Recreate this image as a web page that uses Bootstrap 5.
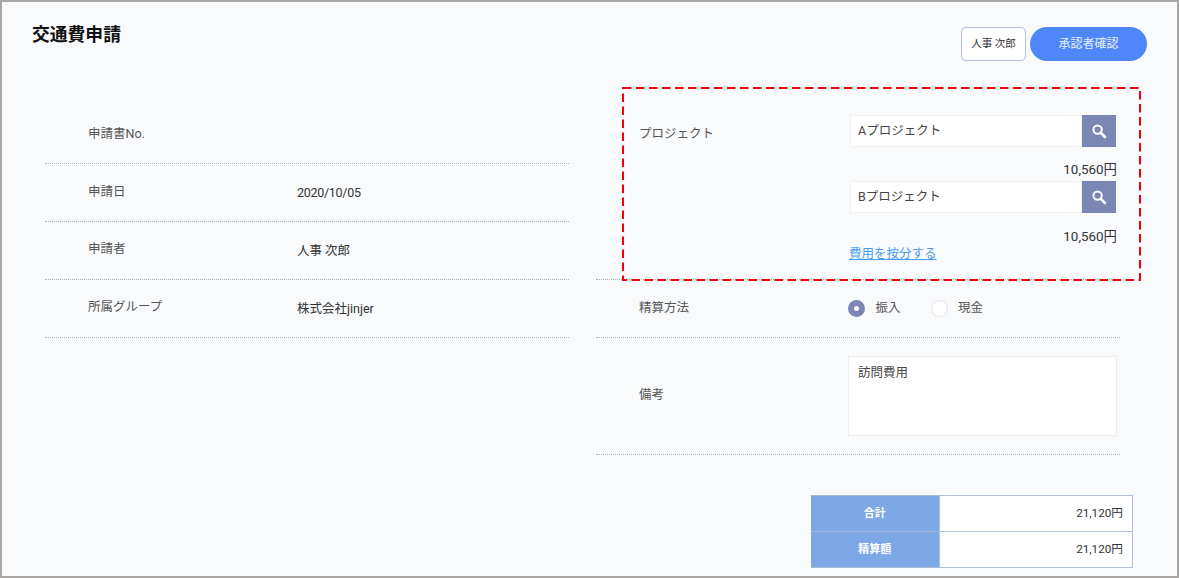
<!DOCTYPE html>
<html lang="ja">
<head>
<meta charset="utf-8">
<title>交通費申請</title>
<link rel="stylesheet" href="https://cdn.jsdelivr.net/npm/bootstrap@5.3.0/dist/css/bootstrap.min.css">
<style>
html,body{height:100%;}
body{background:#f9fafc;font-family:Roboto,"Noto Sans CJK JP",sans-serif;font-size:12.5px;color:#333;overflow:hidden;}
.app-frame{position:relative;height:578px;border:2px solid #aaa8a6;padding:0 30px 0 30px;overflow:hidden;}
.page-head{height:104px;}
.page-title{font-size:17.8px;font-weight:700;color:#111;margin:22px 0 0;line-height:22px;}
.head-actions{margin-top:25px;}
.user-chip{width:65px;height:34px;border:1px solid #b4bfd6;border-radius:5px;background:#fff;font-size:10.5px;color:#333;padding:0;margin-right:4px;}
.confirm-btn{width:117px;height:34px;border-radius:17px;border:0;background:#4f87fb;color:#e8efff;font-size:12px;padding:0;}
.left-col{width:524px;margin-left:13px;}
.right-col{width:524px;margin-left:27px;}
.form-line{display:flex;border-bottom:1px dotted #b0b2b6;height:58px;}
.left-col .key{width:252px;padding-left:43px;color:#555;line-height:56px;}
.left-col .key.up{line-height:54px;}
.left-col .val{line-height:58px;color:#333;}
.date-text{letter-spacing:-.28px;}
.right-col .key{width:252px;padding-left:43px;color:#555;}
.right-col .val{width:268px;}
.project-line{height:174px;}
.project-line .key{padding-top:19px;}
.search-box{display:flex;width:266px;height:32px;margin-left:2px;margin-top:9px;}
.search-text{flex:1;border:1px solid #eef0f3;background:#fff;padding:1px 7px 0;line-height:28px;color:#444;}
.search-go{width:34px;background:#7b86b4;display:flex;align-items:center;justify-content:center;}
.amount{text-align:right;width:269px;font-size:13.4px;line-height:17px;color:#333;margin-top:14px;margin-bottom:3px;}
.search-box.second{margin-top:0;}
.amount.second{margin-top:15px;margin-bottom:0;}
.split-link{display:block;margin-left:1px;font-size:12.5px;line-height:17px;color:#4a9bf0;}
.pay-line{align-items:center;}
.radio-dot{width:17px;height:17px;border-radius:50%;border:1px solid #e2e4e8;background:#fff;flex:none;}
.radio-dot.on{border:6px solid #7b86b4;}
.radio-label{color:#555;margin-left:10.5px;margin-right:30px;}
.note-line{height:117px;align-items:center;}
.note-box{width:269px;height:80px;border:1px solid #eceef1;background:#fff;padding:7px 9px;color:#444;line-height:18px;margin-bottom:1px;}
.note-line .key{padding-bottom:2px;}
.total-wrap{width:322px;margin-left:215px;margin-top:40px;}
.total-grid{width:100%;border-collapse:collapse;}
.total-grid th{width:128px;height:36px;background:#7da8e6;color:#fff;font-size:11px;text-align:center;border:1px solid #a9b8d4;border-right:0;border-left:0;padding-top:2px;}
.total-grid td{height:36px;background:#fff;text-align:right;font-size:11.7px;padding:1px 9px 0;color:#333;border:1px solid #b4c0da;}
.red-box{position:absolute;left:620px;top:85px;width:519px;height:194px;pointer-events:none;}
.red-box rect{fill:none;stroke:#f00008;stroke-width:2;stroke-dasharray:8.5 4.5;}
</style>
</head>
<body>
<div class="app-frame">
  <div class="page-head d-flex justify-content-between align-items-start">
    <h1 class="page-title">交通費申請</h1>
    <div class="head-actions d-flex">
      <button class="user-chip" type="button">人事 次郎</button>
      <button class="confirm-btn" type="button">承認者確認</button>
    </div>
  </div>
  <div class="d-flex">
    <div class="left-col">
      <div class="form-line"><div class="key">申請書No.</div><div class="val"></div></div>
      <div class="form-line"><div class="key">申請日</div><div class="val date-text">2020/10/05</div></div>
      <div class="form-line"><div class="key up">申請者</div><div class="val">人事 次郎</div></div>
      <div class="form-line"><div class="key up">所属グループ</div><div class="val">株式会社jinjer</div></div>
    </div>
    <div class="right-col">
      <div class="form-line project-line">
        <div class="key">プロジェクト</div>
        <div class="val">
          <div class="search-box">
            <div class="search-text">Aプロジェクト</div>
            <div class="search-go"><svg width="16" height="16" viewBox="0 0 16 16" fill="none" stroke="#fff"><circle cx="6.6" cy="6.6" r="4.2" stroke-width="2"/><path d="M9.8 9.8 14 14" stroke-width="2.6" stroke-linecap="round"/></svg></div>
          </div>
          <div class="amount">10,560円</div>
          <div class="search-box second">
            <div class="search-text">Bプロジェクト</div>
            <div class="search-go"><svg width="16" height="16" viewBox="0 0 16 16" fill="none" stroke="#fff"><circle cx="6.6" cy="6.6" r="4.2" stroke-width="2"/><path d="M9.8 9.8 14 14" stroke-width="2.6" stroke-linecap="round"/></svg></div>
          </div>
          <div class="amount second">10,560円</div>
          <a class="split-link" href="#">費用を按分する</a>
        </div>
      </div>
      <div class="form-line pay-line">
        <div class="key">精算方法</div>
        <div class="val d-flex align-items-center">
          <span class="radio-dot on"></span><span class="radio-label">振入</span>
          <span class="radio-dot"></span><span class="radio-label">現金</span>
        </div>
      </div>
      <div class="form-line note-line">
        <div class="key">備考</div>
        <div class="val"><div class="note-box">訪問費用</div></div>
      </div>
      <div class="total-wrap">
        <table class="total-grid">
          <tr><th>合計</th><td>21,120円</td></tr>
          <tr><th>精算額</th><td>21,120円</td></tr>
        </table>
      </div>
    </div>
  </div>
  <svg class="red-box" viewBox="0 0 519 194"><rect x="1" y="1" width="517" height="192"/></svg>
</div>
</body>
</html>
